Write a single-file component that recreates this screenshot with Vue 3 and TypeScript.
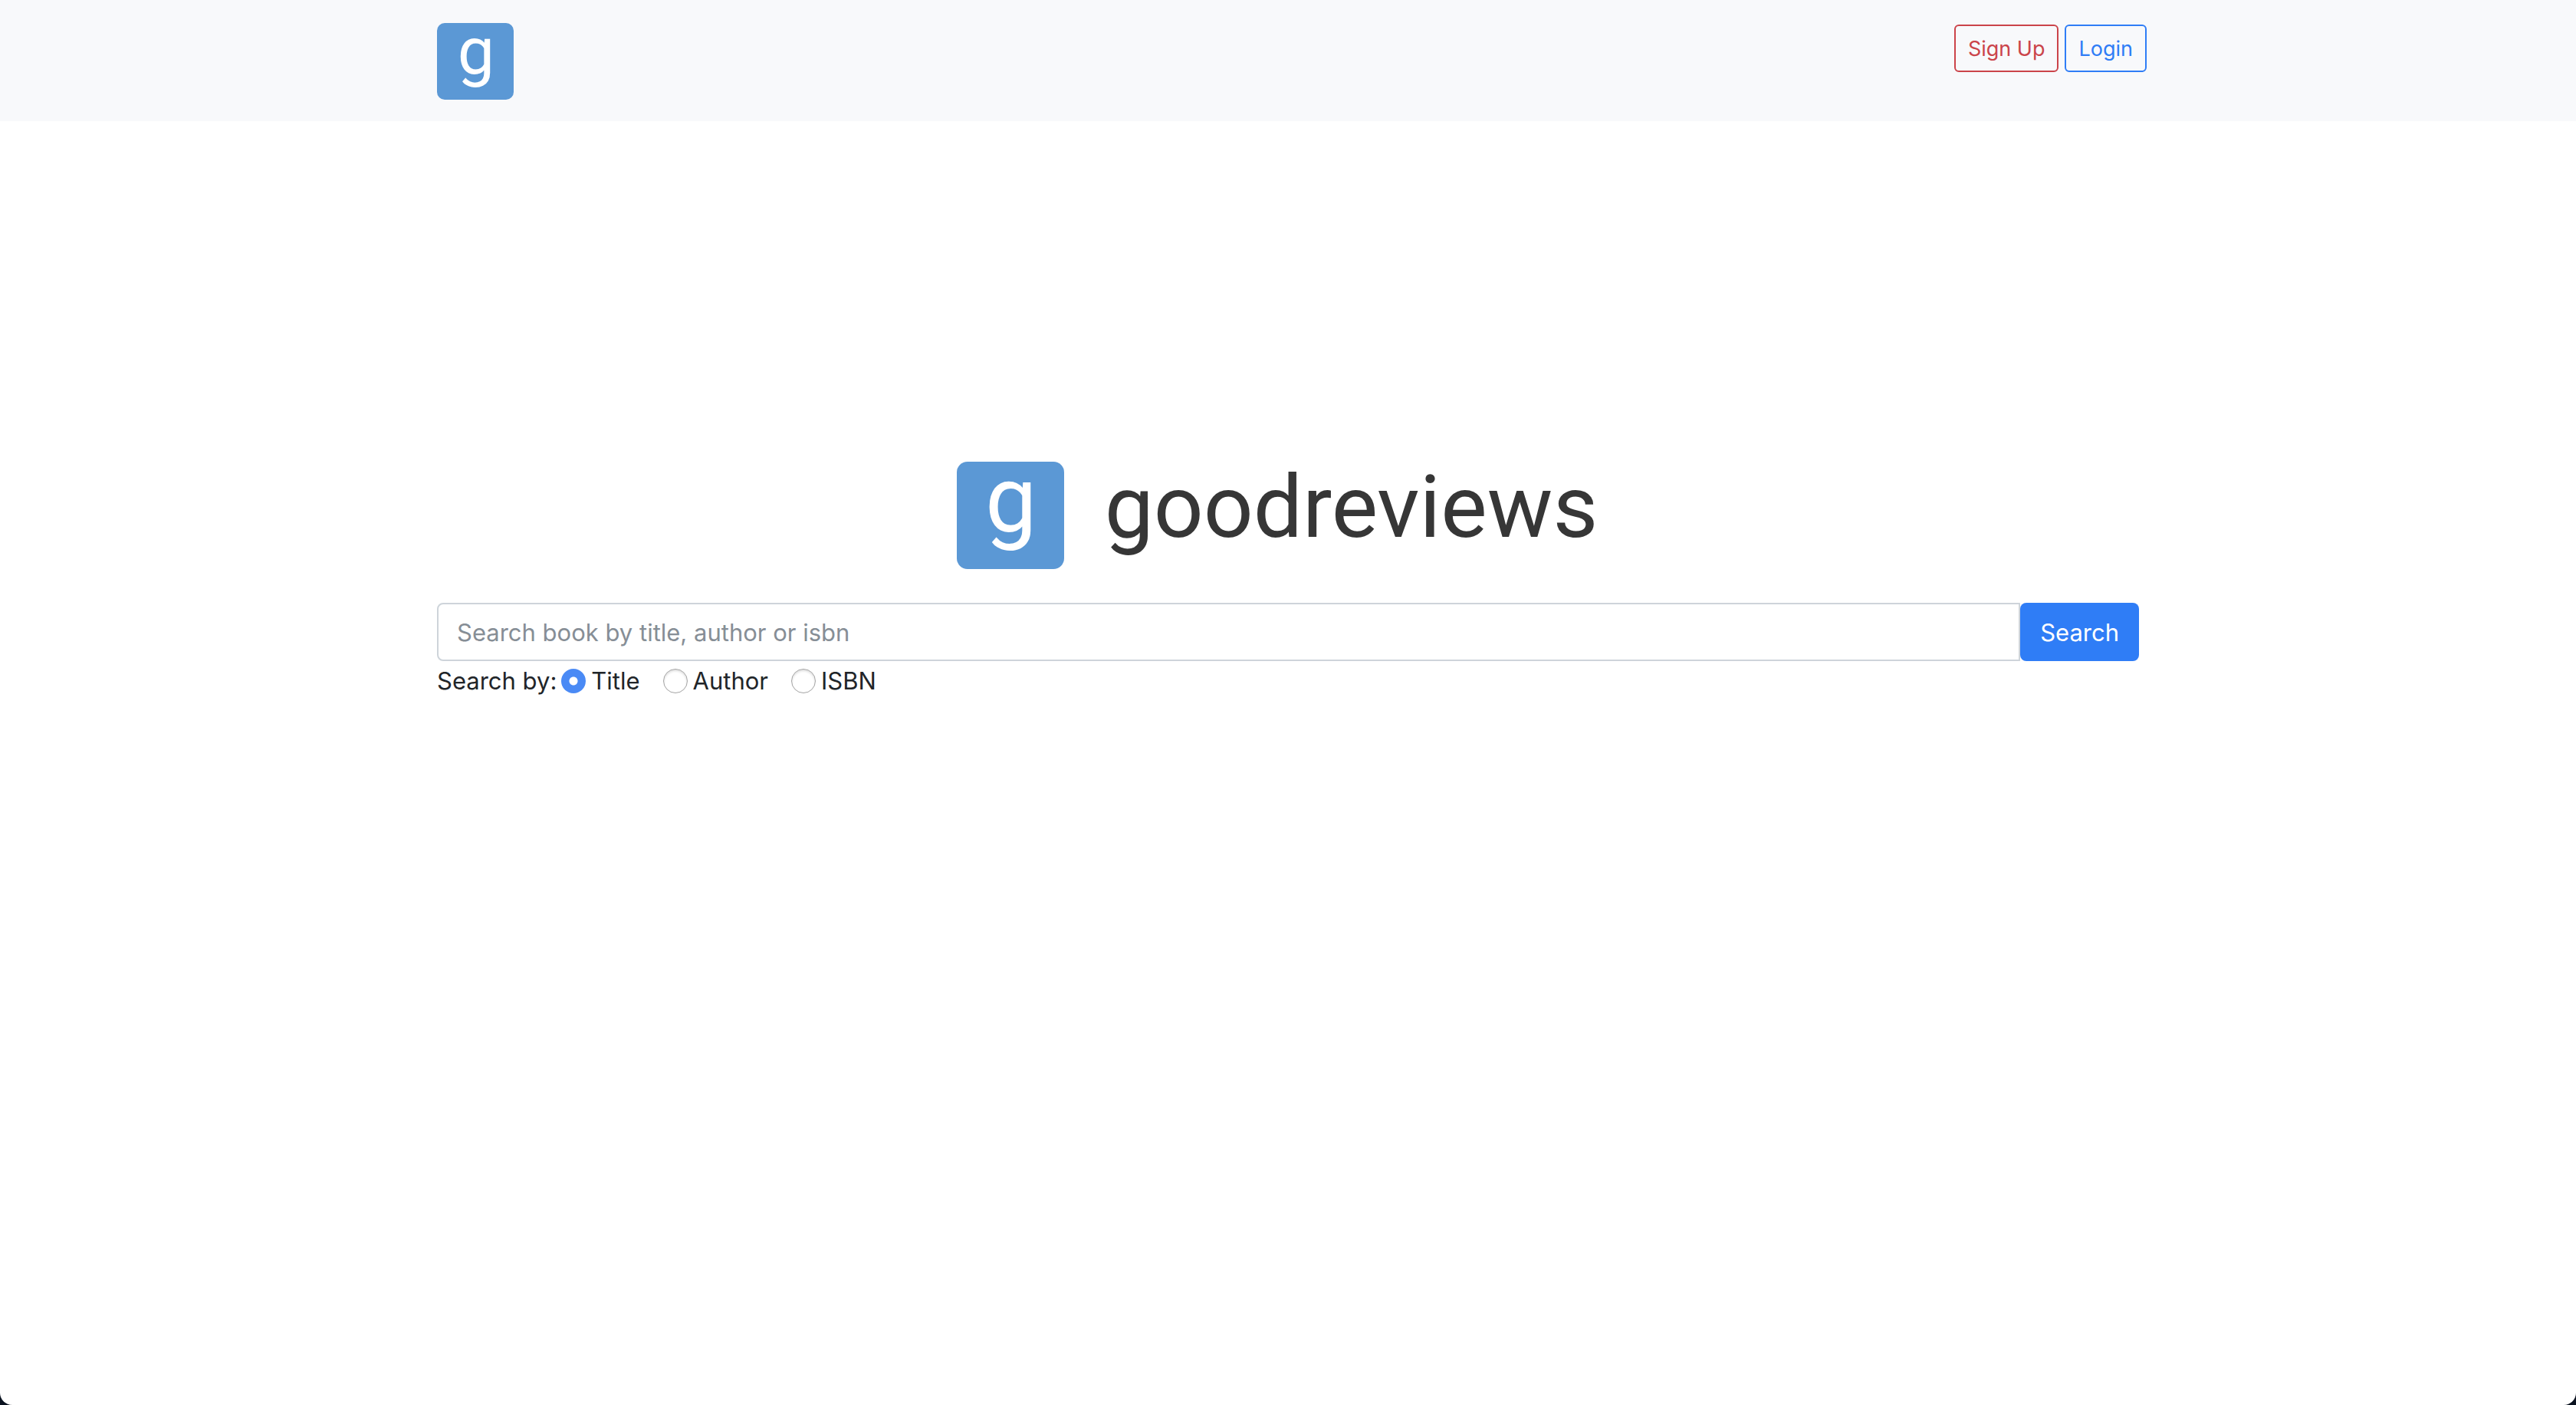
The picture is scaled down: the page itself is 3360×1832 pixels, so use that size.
<script setup lang="ts">
import { ref } from 'vue'

type SearchField = 'title' | 'author' | 'isbn'

const fields: { value: SearchField; label: string }[] = [
  { value: 'title', label: 'Title' },
  { value: 'author', label: 'Author' },
  { value: 'isbn', label: 'ISBN' },
]

const query = ref('')
const searchBy = ref<SearchField>('title')
</script>

<template>
  <div class="page">
    <header class="navbar">
      <div class="container navbar-inner">
        <a class="logo logo-small" href="#" aria-label="goodreviews home">g</a>
        <nav class="actions">
          <button type="button" class="btn-outline danger">Sign Up</button>
          <button type="button" class="btn-outline primary">Login</button>
        </nav>
      </div>
    </header>

    <main class="container main">
      <div class="brand">
        <span class="logo logo-large" aria-hidden="true">g</span>
        <h1 class="wordmark">goodreviews</h1>
      </div>
      <form @submit.prevent>
        <div class="search-row">
          <input
            v-model="query"
            class="search-input"
            type="text"
            aria-label="Search book"
            placeholder="Search book by title, author or isbn"
          />
          <button type="submit" class="search-button">Search</button>
        </div>
        <div class="options" role="radiogroup" aria-labelledby="search-by">
          <span id="search-by" class="options-label">Search by:</span>
          <label v-for="field in fields" :key="field.value" class="option">
            <input v-model="searchBy" type="radio" name="search-by" :value="field.value" />
            <span>{{ field.label }}</span>
          </label>
        </div>
      </form>
    </main>
  </div>
</template>

<style>
html {
  background: #0b1320;
}
</style>

<style scoped>
.page {
  min-height: 100vh;
  background: #fff;
  border-radius: 0 0 16px 16px;
  overflow: hidden;
  color: #212529;
  font-family: Inter, "Liberation Sans", sans-serif;
  font-size: 31px;
  font-weight: 400;
  line-height: 48px;
}

.page *,
.page {
  box-sizing: border-box;
}

.container {
  width: 100%;
  max-width: 2280px;
  margin: 0 auto;
  padding: 0 30px;
}

.navbar {
  background: #f8f9fb;
}

.navbar-inner {
  display: flex;
  justify-content: space-between;
  align-items: flex-start;
  padding: 30px 20px 28px 30px;
}

.logo {
  display: block;
  flex: none;
  padding-left: 2px;
  background: #5b98d5;
  color: #fff;
  font-family: Roboto, sans-serif;
  font-weight: 400;
  text-align: center;
  text-decoration: none;
}

.logo-small {
  width: 100px;
  height: 100px;
  border-radius: 10px;
  font-size: 86px;
  line-height: 74px;
}

.logo-large {
  width: 140px;
  height: 140px;
  border-radius: 14px;
  font-size: 120px;
  line-height: 100px;
}

.actions {
  display: flex;
  gap: 8px;
  padding-top: 2px;
}

.btn-outline {
  height: 62px;
  padding: 2px 16px 0;
  border: 2px solid currentColor;
  border-radius: 6px;
  background: transparent;
  font-family: inherit;
  font-size: 27px;
  font-weight: inherit;
  line-height: 42px;
}

.danger {
  color: #cb444a;
}

.primary {
  color: #2f7df6;
}

.main {
  padding-top: 444px;
}

.brand {
  display: flex;
  justify-content: center;
  gap: 53px;
  padding-right: 28px;
  margin-bottom: 44px;
}

.wordmark {
  margin: 0;
  color: #363636;
  font-family: Roboto, sans-serif;
  font-size: 114px;
  font-weight: 400;
  line-height: 118px;
}

.search-row {
  display: flex;
}

.search-input {
  flex: 1;
  min-width: 0;
  height: 76px;
  padding: 0 24px;
  border: 2px solid #ced4da;
  border-radius: 8px 0 0 8px;
  background: #fff;
  color: #495057;
  font-family: inherit;
  font-size: 31px;
  font-weight: inherit;
}

.search-input::placeholder {
  color: #868e96;
  opacity: 1;
}

.search-button {
  height: 76px;
  padding: 0 26px;
  border: 0;
  border-radius: 8px;
  background: #2f7df6;
  color: #fff;
  font-family: inherit;
  font-size: 31px;
  font-weight: inherit;
}

.options {
  display: flex;
  align-items: center;
  padding-top: 2px;
}

.options-label {
  margin-right: 6px;
}

.option {
  display: flex;
  align-items: center;
  gap: 7px;
  margin-right: 30px;
}

.option input {
  appearance: none;
  width: 32px;
  height: 32px;
  margin: 0;
  border: 1px solid #a4a4a4;
  border-radius: 50%;
  background: #fff;
  box-shadow: inset 0 2px 3px #dedede;
}

.option input:checked {
  border: 0;
  background: radial-gradient(circle, #fff 5px, #4a8af5 6px);
  box-shadow: none;
}
</style>
